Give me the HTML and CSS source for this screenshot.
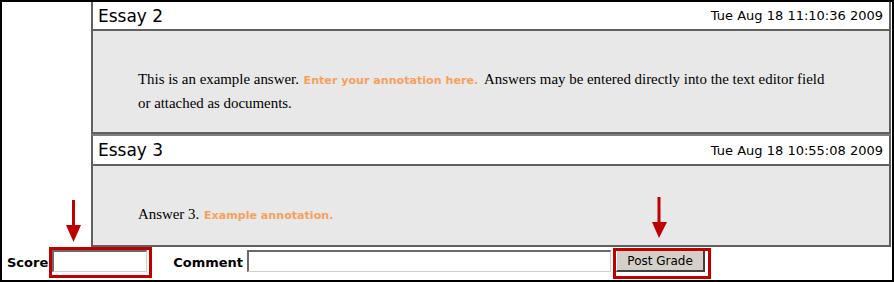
FILE: index.html
```html
<!DOCTYPE html>
<html>
<head>
<meta charset="utf-8">
<link rel="stylesheet" href="styles.css">
</head>
<body>
<div class="frame">
  <div class="side"></div>
  <div class="essays">
    <div class="essay first">
      <div class="essay-head"><span class="title">Essay 2</span><span class="date">Tue Aug 18 11:10:36 2009</span></div>
      <div class="essay-body"><p class="answer">This is an example answer. <span class="note">Enter your annotation here.</span> Answers may be entered directly into the text editor field or attached as documents.</p></div>
    </div>
    <div class="essay second">
      <div class="essay-head"><span class="title">Essay 3</span><span class="date">Tue Aug 18 10:55:08 2009</span></div>
      <div class="essay-body"><p class="answer">Answer 3. <span class="note">Example annotation.</span></p></div>
    </div>
  </div>
  <div class="grade-row">
    <label class="lbl">Score</label>
    <input class="field score" type="text">
    <label class="lbl comment-lbl">Comment</label>
    <input class="field comment" type="text">
    <button class="post">Post Grade</button>
  </div>
  <div class="hl hl-score"></div>
  <div class="hl hl-post"></div>
  <svg class="arrows" width="894" height="282" viewBox="0 0 894 282">
    <rect x="72" y="200" width="3" height="27" fill="#c00000"/>
    <polygon points="66,225 81,225 73.5,242" fill="#c00000"/>
    <rect x="657.5" y="197" width="3" height="27" fill="#c00000"/>
    <polygon points="652,222 667,222 659,238" fill="#c00000"/>
  </svg>
</div>
</body>
</html>
```
FILE: styles.css
```css
html, body {
  margin: 0;
  padding: 0;
  background: #fff;
}
.frame {
  position: relative;
  width: 894px;
  height: 282px;
  box-sizing: border-box;
  border: 2px solid #000;
  display: grid;
  grid-template-columns: 89px 800px;
  grid-template-rows: auto 1fr;
  font-family: "DejaVu Sans", Verdana, sans-serif;
  overflow: hidden;
}
.side {
  background: #fff;
}
.essays {
  display: flex;
  flex-direction: column;
}
.essay {
  border: 2px solid #606060;
}
.essay.first {
  border-top: 0;
}
.essay.second {
  border-top-color: #808080;
}
.essay-head {
  height: 29px;
  box-sizing: border-box;
  border-bottom: 2px solid #606060;
  background: #fff;
  display: flex;
  align-items: center;
  justify-content: space-between;
  padding: 0 6px 0 5px;
}
.second .essay-head {
  height: 30px;
}
.title {
  font-size: 17px;
  color: #000;
}
.date {
  font-size: 13px;
  color: #000;
}
.essay-body {
  background: #e8e8e8;
  padding: 37px 0 18px 45px;
}
.answer {
  margin: 0;
  width: 700px;
  font-family: "Liberation Serif", "Times New Roman", serif;
  font-size: 14.9px;
  line-height: 22px;
  color: #000;
}
.note {
  font-family: "DejaVu Sans", sans-serif;
  font-weight: bold;
  font-size: 11.1px;
  color: #f7a05c;
  margin: 0 3px 0 1px;
}
.grade-row {
  grid-column: 1 / -1;
  display: flex;
  align-items: flex-start;
  padding: 3px 0 0 5px;
}
.lbl {
  font-size: 13px;
  font-weight: bold;
  line-height: 21px;
  margin-top: 2px;
  color: #000;
}
.field {
  box-sizing: border-box;
  height: 22px;
  margin: 0;
  padding: 0;
  background: #fff;
  border-style: solid;
  border-width: 2px 1px 1px 2px;
  border-color: #6a6a6a #d4d0c8 #d4d0c8 #6a6a6a;
}
.score {
  width: 95px;
  margin-left: 4px;
}
.comment-lbl {
  margin-left: 26px;
}
.comment {
  width: 364px;
  margin-left: 4px;
}
.post {
  box-sizing: border-box;
  width: 89px;
  height: 22px;
  margin: 0 0 0 5px;
  padding: 0;
  background: #d4d0c8;
  border-style: solid;
  border-width: 1px 2px 2px 1px;
  border-color: #fff #404040 #404040 #fff;
  font-family: "DejaVu Sans", sans-serif;
  font-size: 12px;
  color: #000;
}
.hl {
  position: absolute;
  box-sizing: border-box;
  border: 3px solid #c00000;
}
.hl-score {
  left: 47px;
  top: 245px;
  width: 103px;
  height: 31px;
}
.hl-post {
  left: 611px;
  top: 246px;
  width: 98px;
  height: 31px;
}
.arrows {
  position: absolute;
  left: -2px;
  top: -2px;
  pointer-events: none;
}
```
